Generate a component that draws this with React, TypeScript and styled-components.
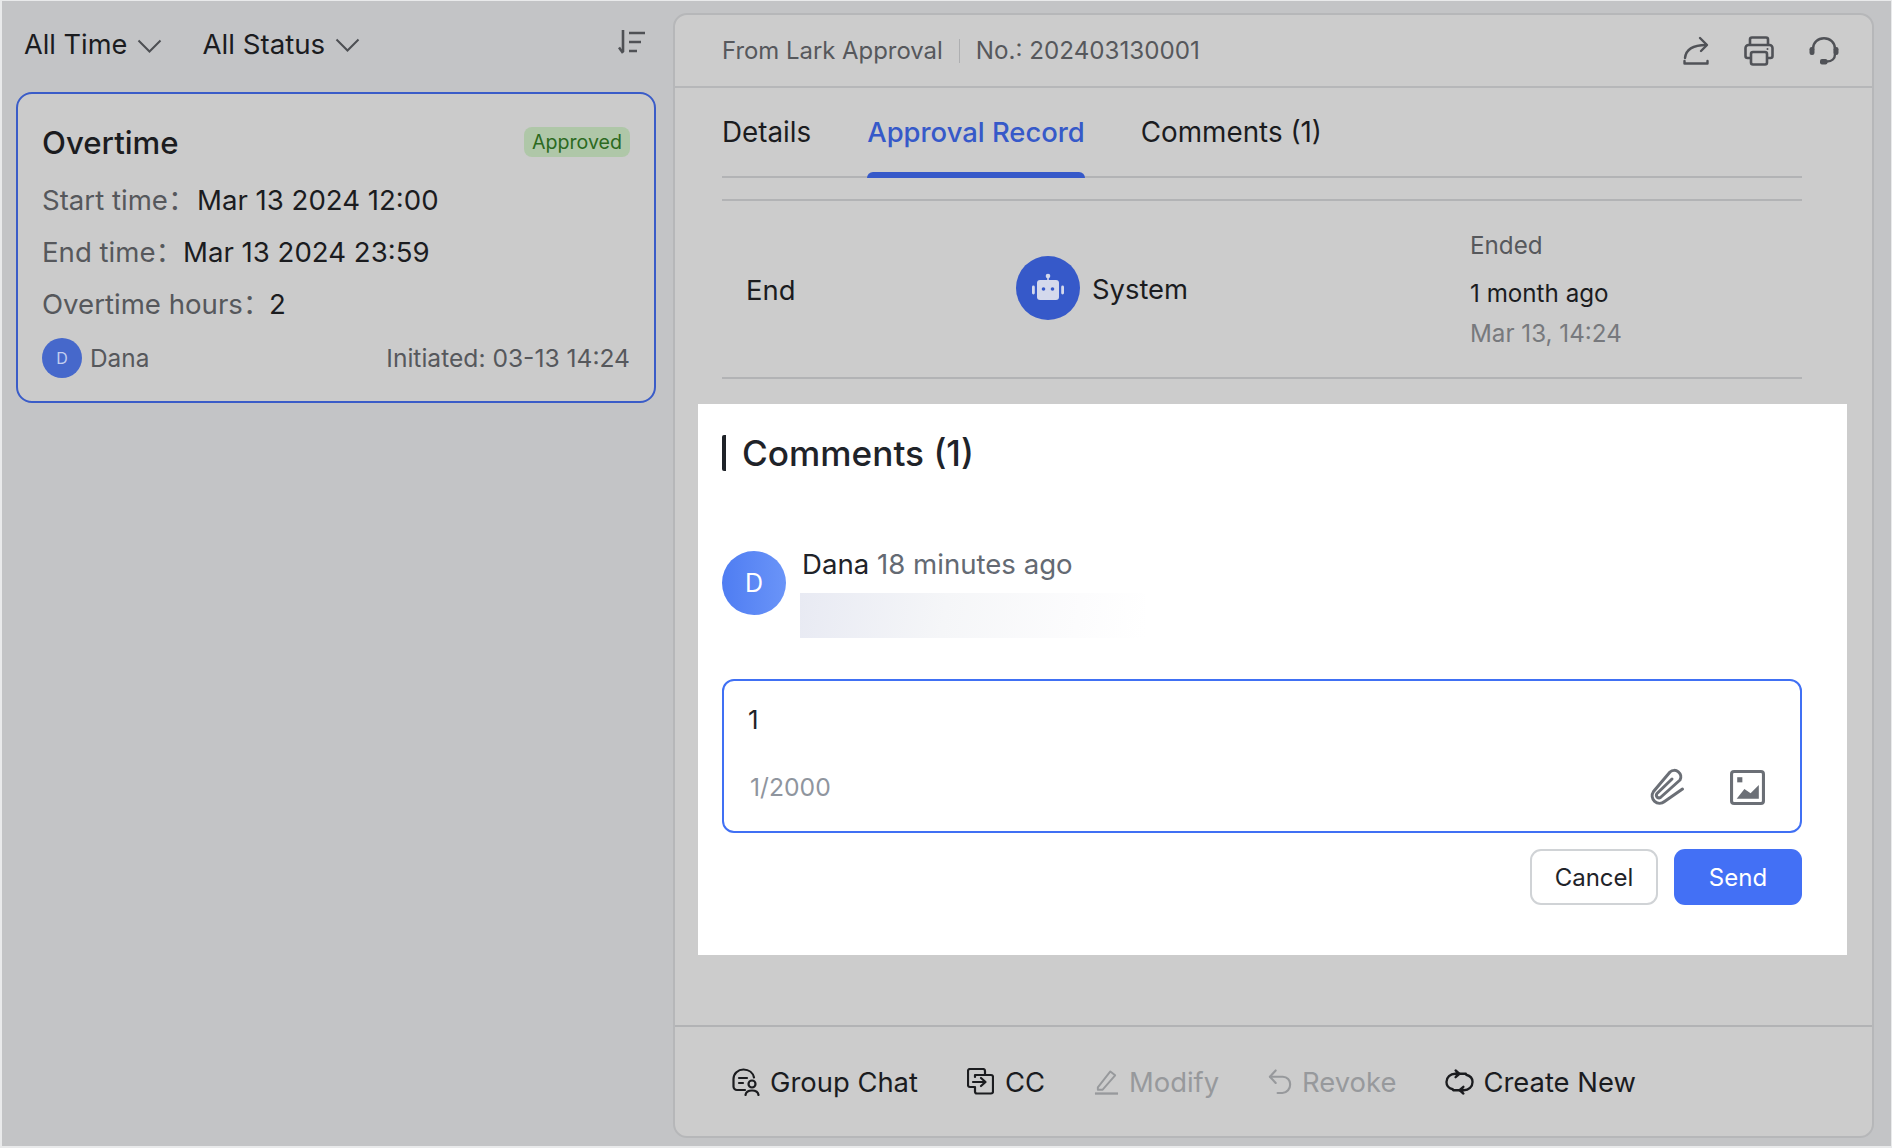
import React from "react";
import styled, { createGlobalStyle } from "styled-components";

const Global = createGlobalStyle`
  html, body { margin: 0; padding: 0; }
  body { font-family: Inter, "Noto Sans CJK SC", "Liberation Sans", sans-serif; background: #e9eaeb; }
  * { box-sizing: border-box; }
`;

const Page = styled.div`
  width: 1892px; height: 1148px; padding: 1px 1px 2px 2px;
  display: flex; overflow: hidden;
`;
const Shell = styled.div`
  flex: 1; height: 100%; display: flex; background: #c3c4c6;
`;
const Side = styled.aside`
  flex: 1; height: 100%; display: flex; align-items: stretch;
`;
const SideInner = styled.div`
  width: 670px; flex: none; padding-left: 14px;
`;
const Toolbar = styled.div`
  height: 91px; padding: 28px 0 0 8px; display: flex; align-items: flex-start; width: 642px;
`;
const Filter = styled.div<{ $gap: number; $size: number; $lift?: number }>`
  display: flex; align-items: center; font-size: ${p => p.$size}px; line-height: 32px; color: #1b1c1f;
  margin-right: ${p => p.$gap}px; margin-top: ${p => p.$lift ?? 0}px;
  svg { margin-left: 10px; margin-top: 2px; }
`;
const SortBtn = styled.div`
  margin-left: auto; display: flex; margin-right: 12px; margin-top: 1px;
`;
const Card = styled.div`
  width: 640px; height: 311px; border: 2px solid #3a5cc8; border-radius: 16px; background: #cbcbcb;
  padding: 29px 24px 0 24px;
`;
const CardHead = styled.div`
  display: flex; justify-content: space-between; align-items: flex-start; height: 40px;
`;
const CardTitle = styled.div`
  font-size: 31.2px; line-height: 40px; font-weight: 500; color: #1b1c1f;
`;
const Badge = styled.span`
  margin-top: 4px; height: 30px; padding: 0 8px; border-radius: 8px; background: #afc7a8; color: #2c6a1f;
  font-size: 19.6px; line-height: 30px;
`;
const Field = styled.div`
  display: flex; font-size: 27.6px; line-height: 32px; margin-top: 20px;
  &:first-of-type { margin-top: 0; }
`;
const Fields = styled.div`
  margin-top: 21px; display: flex; flex-direction: column;
`;
const Label = styled.span<{ $w: number }>`
  color: #56585c;
  width: ${p => p.$w}px;
  flex: none; white-space: nowrap;
`;
const Value = styled.span`
  color: #1b1c1f;
`;
const CardFoot = styled.div`
  display: flex; align-items: center; margin-top: 18px; height: 40px; font-size: 24.4px; color: #56585c;
`;
const MiniAvatar = styled.div`
  width: 40px; height: 40px; border-radius: 50%; background: #4668cb; color: #c3cef0; font-size: 16px;
  display: flex; align-items: center; justify-content: center; margin-right: 8px;
`;
const Initiated = styled.span`
  margin-left: auto; font-size: 24.6px;
`;

const Panel = styled.section`
  width: 1201px; flex: none; margin: 12px 17px 8px 0; border: 2px solid #b6b7b9; border-radius: 14px;
  background: #cccccc; display: flex; flex-direction: column;
`;
const PanelHead = styled.header`
  height: 73px; flex: none; border-bottom: 2px solid #b6b7b9; padding: 0 33px 0 47px; display: flex; align-items: center;
  font-size: 23.9px; color: #56585c;
`;
const Sep = styled.span`
  width: 1px; height: 24px; background: #aeafb1; margin: 0 16px 0 16px;
`;
const RecordNo = styled.span`
  font-size: 24.2px;
`;
const HeadIcons = styled.div`
  margin-left: auto; display: flex; align-items: center; gap: 35px;
`;
const Body = styled.div`
  padding: 0 70px 0 47px; flex: 1;
`;
const TabBar = styled.nav`
  height: 90px; border-bottom: 2px solid #b2b3b5; display: flex; gap: 56px;
`;
const Tab = styled.div<{ $active?: boolean }>`
  position: relative; height: 88px; padding-top: 26px; line-height: 36px;
  font-size: ${p => (p.$active ? 27.4 : 27.8)}px;
  font-weight: ${p => (p.$active ? 500 : 400)};
  color: ${p => (p.$active ? "#3659c9" : "#1b1c1f")};
  ${p => p.$active && `
    &::after { content: ""; position: absolute; left: 0; right: 0; bottom: -2px; height: 6px; background: #3659c9; border-radius: 6px 6px 0 0; }
  `}
`;
const Row = styled.div`
  margin-top: 21px; height: 180px; border-top: 2px solid #b2b3b5; border-bottom: 2px solid #b2b3b5;
  display: grid; grid-template-columns: 270px 454px 1fr; padding-left: 24px; align-items: center;
`;
const StepName = styled.div`
  font-size: 27.4px; color: #1b1c1f; margin-top: 1px;
`;
const Person = styled.div`
  display: flex; align-items: center; font-size: 27.4px; color: #1b1c1f; gap: 12px; margin-top: -3px;
`;
const PersonName = styled.span`
  margin-top: 3px;
`;
const RobotAvatar = styled.div`
  width: 64px; height: 64px; border-radius: 50%; background: #3659c9; display: flex; align-items: center; justify-content: center;
`;
const Status = styled.div`
  display: flex; flex-direction: column; font-size: 24.2px; line-height: 30px; margin-top: 2px;
`;
const StatusText = styled.span<{ $tone: string; $top: number }>`
  color: ${p => p.$tone};
  margin-top: ${p => p.$top}px;
`;
const WhiteCard = styled.div`
  margin: 25px -45px 0 -24px; height: 551px; background: #fff; padding: 31px 45px 0 24px;
`;
const Heading = styled.h2`
  margin: 0; height: 36px; border-left: 4px solid #1f2329; border-radius: 2px; padding-left: 16px;
  font-size: 35.2px; line-height: 37px; font-weight: 500; color: #1f2329;
`;
const Comment = styled.div`
  margin-top: 80px; display: flex; height: 87px;
`;
const Avatar = styled.div`
  width: 64px; height: 64px; border-radius: 50%; flex: none; background: linear-gradient(90deg, #4f7df2, #6a94f8); color: #fff; font-size: 25px;
  display: flex; align-items: center; justify-content: center;
`;
const CommentCol = styled.div`
  margin-left: 14px;
`;
const CommentLine = styled.div`
  font-size: 27.6px; line-height: 28px; margin: -1px 0 0 2px; color: #1f2329; white-space: nowrap;
  span { color: #646a73; }
`;
const Blurred = styled.div`
  width: 345px; height: 45px; margin-top: 15px;
  background: linear-gradient(100deg, #e8eaf3 0%, #f5f6f8 42%, #fcfcfd 80%, #ffffff 100%);
`;
const InputBox = styled.div`
  margin-top: 41px; height: 154px; border: 2px solid #4070f4; border-radius: 12px; padding: 23px 35px 0 25px; display: flex; flex-direction: column;
`;
const InputText = styled.div`
  font-size: 26px; line-height: 32px; color: #1f2329; margin-left: -1px;
`;
const InputFoot = styled.div`
  display: flex; align-items: center; margin: 32px 0 0 1px; font-size: 24.7px; color: #8f959e;
`;
const InputIcons = styled.div`
  margin-left: auto; display: flex; align-items: center; gap: 45px;
`;
const Actions = styled.div`
  margin-top: 16px; display: flex; justify-content: flex-end; gap: 16px;
`;
const Btn = styled.div<{ $primary?: boolean }>`
  width: 128px; height: 56px; border-radius: 11px; display: flex; align-items: center; justify-content: center; font-size: 24px;
  background: ${p => (p.$primary ? "#4370f5" : "#fff")};
  color: ${p => (p.$primary ? "#fff" : "#1f2329")};
  border: ${p => (p.$primary ? "none" : "2px solid #d0d3d6")};
`;
const Footer = styled.footer`
  height: 111px; flex: none; border-top: 2px solid #b2b3b5; display: flex; align-items: center; padding: 0 0 0 57px; gap: 49px;
`;
const FootItem = styled.div<{ $off?: boolean; $gap?: number }>`
  display: flex; align-items: center; gap: ${p => p.$gap ?? 10}px; font-size: 27.4px; color: ${p => (p.$off ? "#97999c" : "#1b1c1f")};
`;

const Chevron = () => (
  <svg width="25" height="14" viewBox="0 0 25 14" fill="none" stroke="#4d4f53" strokeWidth="2">
    <path d="M1.500 1.500 12.500 12.500 23.500 1.500" />
  </svg>
);
const SortIcon = () => (
  <svg width="28" height="26" viewBox="0 0 28 26" fill="none" stroke="#4f5155" strokeWidth="2.6">
    <path d="M5 0v22" />
    <path d="M1 17.500 5 23" />
    <path d="M11 3h16M11 12h12M11 21h8" />
  </svg>
);
const ShareIcon = () => (
  <svg width="26" height="29" viewBox="0 0 26 29" fill="none" stroke="#505257" strokeWidth="2.4" strokeLinecap="round" strokeLinejoin="round">
    <path d="M2 22c1-9 8-13 21-13" />
    <path d="M17 2l7 7-6 6" />
    <path d="M1.500 25v2.500h23V25" />
  </svg>
);
const PrintIcon = () => (
  <svg width="30" height="30" viewBox="0 0 30 30" fill="none" stroke="#505257" strokeWidth="2.600" strokeLinejoin="round">
    <path d="M6 9V3.500a2 2 0 0 1 2-2h14a2 2 0 0 1 2 2V9" />
    <path d="M7 22H3.500a2 2 0 0 1-2-2v-8a3 3 0 0 1 3-3h21a3 3 0 0 1 3 3v8a2 2 0 0 1-2 2H23" />
    <rect x="7" y="16" width="16" height="12.500" rx="2" />
    <circle cx="23.500" cy="13" r="1" fill="#505257" stroke="none" />
  </svg>
);
const HeadsetIcon = () => (
  <svg width="30" height="28" viewBox="0 0 30 28" fill="none" stroke="#505257" strokeWidth="2.400" strokeLinecap="round">
    <path d="M4 12C4 5.500 9 1.300 15 1.300S26 5.500 26 12v5c0 4.500-3 7.500-8 7.500" />
    <rect x="0.500" y="10" width="5" height="8" rx="2.200" fill="#505257" stroke="none" />
    <rect x="24.500" y="10" width="5" height="8" rx="2.200" fill="#505257" stroke="none" />
    <rect x="11" y="22" width="7.500" height="5.500" rx="2" fill="#505257" stroke="none" />
  </svg>
);
const RobotIcon = () => (
  <svg width="32" height="32" viewBox="0 0 32 32">
    <g fill="#d4d9ec">
      <circle cx="16" cy="4" r="2.300" />
      <rect x="15.200" y="4" width="1.600" height="5" />
      <rect x="5" y="8" width="22" height="20" rx="3" />
      <rect x="0" y="13.500" width="2.800" height="9" rx="1.400" />
      <rect x="29.200" y="13.500" width="2.800" height="9" rx="1.400" />
    </g>
    <circle cx="11.500" cy="17" r="1.800" fill="#3659c9" />
    <circle cx="20.500" cy="17" r="1.800" fill="#3659c9" />
  </svg>
);
const ClipIcon = () => (
  <svg width="36" height="38" viewBox="0 0 36 38" fill="none" stroke="#6b6f76" strokeWidth="3" strokeLinecap="round" strokeLinejoin="round">
    <path d="M33.500 21 15.500 33.500a7.500 7.500 0 0 1-11-10L21 4a6.500 6.500 0 0 1 10 8L12 29a2.500 2.500 0 0 1-4-3.500L23 11" />
  </svg>
);
const ImageIcon = () => (
  <svg width="35" height="35" viewBox="0 0 34 34" fill="none">
    <rect x="1.500" y="1.500" width="31" height="31" rx="2.500" stroke="#6b6f76" strokeWidth="3" />
    <rect x="7" y="7" width="5" height="5" fill="#6b6f76" />
    <path d="M6.500 28 14 18.500l6 4 8-8V28Z" fill="#6b6f76" />
  </svg>
);
const GroupIcon = () => (
  <svg width="28" height="28" viewBox="0 0 28 28" fill="none" stroke="#1b1c1f" strokeWidth="2.200" strokeLinecap="round" strokeLinejoin="round">
    <path d="M13 22H5a3.500 3.500 0 0 1-3.500-3.500V11C1.500 5.500 6 1.500 11.500 1.500S21 5 22 9.500" />
    <path d="M7 10h8M7 15h4" />
    <circle cx="20" cy="16" r="3.500" />
    <path d="M13.500 27c.5-3.500 3-4.500 6.500-4.500s6 1 6.500 4.500" />
  </svg>
);
const CcIcon = () => (
  <svg width="27" height="27" viewBox="0 0 27 27" fill="none" stroke="#1b1c1f" strokeWidth="2.200" strokeLinejoin="round" strokeLinecap="round">
    <path d="M7 19H3a2 2 0 0 1-2-2V3a2 2 0 0 1 2-2h13a2 2 0 0 1 2 2v4" />
    <path d="M8 9V7h16a2 2 0 0 1 2 2v14.500a2 2 0 0 1-2 2H10a2 2 0 0 1-2-2V19" />
    <path d="M6 14h12M14 10l4.500 4-4.500 4" />
  </svg>
);
const ModifyIcon = () => (
  <svg width="25" height="26" viewBox="0 0 26 26" fill="none" stroke="#97999c" strokeWidth="2" strokeLinejoin="round">
    <path d="M4 18.500 17 2l5 4L9 21H4Z" />
    <path d="M1 25h24" strokeWidth="2.400" />
  </svg>
);
const RevokeIcon = () => (
  <svg width="24" height="26" viewBox="0 0 25 26" fill="none" stroke="#97999c" strokeWidth="2.200" strokeLinecap="round" strokeLinejoin="round">
    <path d="M8 1 2 7.500 8 14" />
    <path d="M2 7.500h13.500a7.500 7.500 0 0 1 7.500 8 8.500 8.500 0 0 1-8 9h-5" />
  </svg>
);
const RefreshIcon = () => (
  <svg width="29" height="26" viewBox="0 0 30 26" fill="none" stroke="#1b1c1f" strokeWidth="2.400" strokeLinecap="round" strokeLinejoin="round">
    <path d="M8 20.500c-4-1-6.500-4-6.500-7.500 0-5 4-8.500 9-8.500h11" />
    <path d="M22 5.500c4 1 6.500 4 6.500 7.500 0 5-4 8.500-9 8.500h-11" />
    <path d="M11 1 15 4.500 11 8M19 18l-4 3.500 4 3.500" fill="#1b1c1f" />
  </svg>
);

export default function App() {
  return (
    <>
      <Global />
      <Page>
        <Shell>
          <Side>
            <SideInner>
              <Toolbar>
                <Filter $gap={40} $size={27.2}>All Time<Chevron /></Filter>
                <Filter $gap={0} $size={27.7} $lift={-1}>All Status<Chevron /></Filter>
                <SortBtn><SortIcon /></SortBtn>
              </Toolbar>
              <Card>
                <CardHead>
                  <CardTitle>Overtime</CardTitle>
                  <Badge>Approved</Badge>
                </CardHead>
                <Fields>
                  <Field><Label $w={155}>Start time：</Label><Value>Mar 13 2024 12:00</Value></Field>
                  <Field><Label $w={141}>End time：</Label><Value>Mar 13 2024 23:59</Value></Field>
                  <Field><Label $w={227}>Overtime hours：</Label><Value>2</Value></Field>
                </Fields>
                <CardFoot>
                  <MiniAvatar>D</MiniAvatar>
                  Dana
                  <Initiated>Initiated: 03-13 14:24</Initiated>
                </CardFoot>
              </Card>
            </SideInner>
          </Side>
          <Panel>
            <PanelHead>
              From Lark Approval<Sep /><RecordNo>No.: 202403130001</RecordNo>
              <HeadIcons><ShareIcon /><PrintIcon /><HeadsetIcon /></HeadIcons>
            </PanelHead>
            <Body>
              <TabBar>
                <Tab>Details</Tab>
                <Tab $active>Approval Record</Tab>
                <Tab>Comments (1)</Tab>
              </TabBar>
              <Row>
                <StepName>End</StepName>
                <Person><RobotAvatar><RobotIcon /></RobotAvatar><PersonName>System</PersonName></Person>
                <Status>
                  <StatusText $tone="#56585c" $top={0}>Ended</StatusText>
                  <StatusText $tone="#1b1c1f" $top={18}>1 month ago</StatusText>
                  <StatusText $tone="#77797d" $top={10}>Mar 13, 14:24</StatusText>
                </Status>
              </Row>
              <WhiteCard>
                <Heading>Comments (1)</Heading>
                <Comment>
                  <Avatar>D</Avatar>
                  <CommentCol>
                    <CommentLine>Dana <span>18 minutes ago</span></CommentLine>
                    <Blurred />
                  </CommentCol>
                </Comment>
                <InputBox>
                  <InputText>1</InputText>
                  <InputFoot>
                    1/2000
                    <InputIcons><ClipIcon /><ImageIcon /></InputIcons>
                  </InputFoot>
                </InputBox>
                <Actions>
                  <Btn>Cancel</Btn>
                  <Btn $primary>Send</Btn>
                </Actions>
              </WhiteCard>
            </Body>
            <Footer>
              <FootItem><GroupIcon />Group Chat</FootItem>
              <FootItem $gap={11}><CcIcon />CC</FootItem>
              <FootItem $off><ModifyIcon />Modify</FootItem>
              <FootItem $off><RevokeIcon />Revoke</FootItem>
              <FootItem $gap={9}><RefreshIcon />Create New</FootItem>
            </Footer>
          </Panel>
        </Shell>
      </Page>
    </>
  );
}
